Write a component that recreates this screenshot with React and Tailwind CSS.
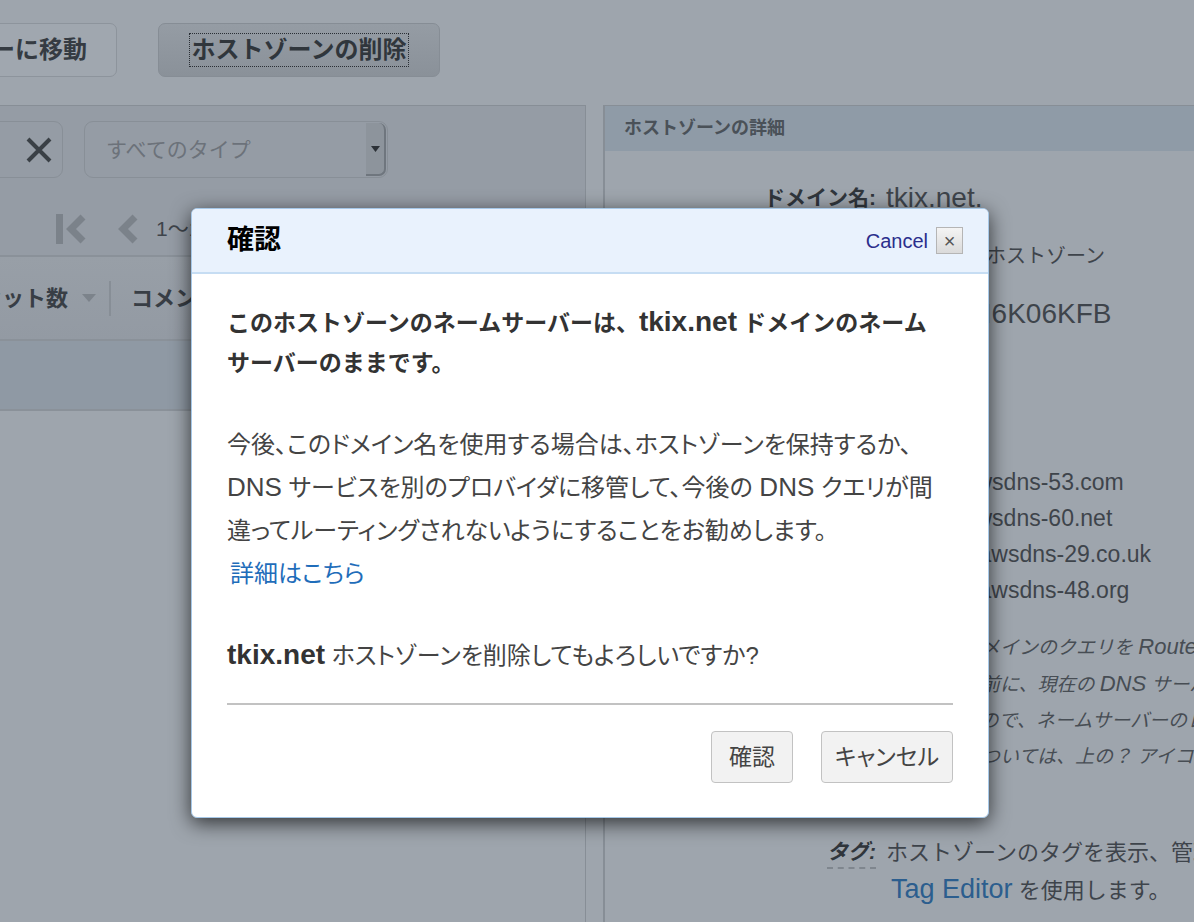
import React from "react";

const F = { fontFamily: '"Liberation Sans", "Noto Sans CJK JP", sans-serif' };

function FirstIcon() {
  return (
    <svg width="31" height="30" viewBox="0 0 31 30">
      <rect x="0" y="0" width="7" height="30" fill="#7b828a" />
      <polyline points="27,3 15,15 27,27" fill="none" stroke="#7b828a" strokeWidth="7" />
    </svg>
  );
}

function PrevIcon() {
  return (
    <svg width="20" height="30" viewBox="0 0 20 30">
      <polyline points="17,3 5,15 17,27" fill="none" stroke="#7b828a" strokeWidth="7" />
    </svg>
  );
}

function XIcon() {
  return (
    <svg width="26" height="26" viewBox="0 0 26 26">
      <path d="M2 2 L24 24 M24 2 L2 24" stroke="#3a4046" strokeWidth="4" />
    </svg>
  );
}

export default function App() {
  return (
    <div
      className="relative h-[922px] w-[1194px] overflow-hidden bg-[#9ea5ad] text-[#3b4148]"
      style={F}
    >
      {/* toolbar */}
      <div className="flex h-[105px] items-start gap-[41px] pt-[23px]">
        <div className="-ml-[159px] flex h-[54px] w-[276px] shrink-0 items-center justify-center rounded-[7px] border border-[#8d949c] bg-[#a0a7af] text-[24px] font-bold text-[#353b42]">
          リストビューに移動
        </div>
        <div className="flex h-[54px] w-[282px] shrink-0 items-center justify-center rounded-[7px] border border-[#868d95] bg-gradient-to-b from-[#959ca4] to-[#8a9199] text-[24px] font-bold text-[#30363c]">
          <span className="border border-dotted border-[#2a2f35] px-[2px] leading-[32px]">ホストゾーンの削除</span>
        </div>
      </div>

      {/* main */}
      <div className="flex h-[817px]">
        {/* left panel */}
        <div className="flex w-[586px] shrink-0 flex-col border-r border-t border-[#878e96]">
          <div className="flex h-[149px] flex-col bg-[#959ca5]">
            <div className="flex items-start gap-[21px] pt-[15px]">
              <div className="-ml-[20px] flex h-[57px] w-[83px] items-center justify-end rounded-[9px] border border-[#888f97] pr-[10px]">
                <XIcon />
              </div>
              <div className="flex h-[57px] w-[304px] items-stretch rounded-[9px] border border-[#888f97]">
                <div className="flex flex-1 items-center pl-[21px] text-[21px] text-[#6c727a]">すべてのタイプ</div>
                <div className="my-[1px] mr-[1px] flex w-[20px] items-center justify-center rounded-r-[7px] border-b-2 border-r-2 border-[#6f767e] bg-[#8d949c]">
                  <svg width="9" height="6" viewBox="0 0 9 6"><path d="M0 0 L9 0 L4.5 6 Z" fill="#2c3137" /></svg>
                </div>
              </div>
            </div>
            <div className="flex items-center pl-[56px] pt-[35px]">
              <FirstIcon />
              <div className="ml-[31px]"><PrevIcon /></div>
              <span className="ml-[18px] text-[21px] text-[#3e444b]">1～10</span>
            </div>
          </div>
          <div className="flex h-[84px] items-center border-t-2 border-[#8a9199] bg-gradient-to-b from-[#989fa7] to-[#939aa3]">
            <span className="-ml-[20px] text-[22px] font-bold text-[#383e45]">セット数</span>
            <svg className="ml-[14px]" width="14" height="8" viewBox="0 0 14 8"><path d="M0 0 L14 0 L7 8 Z" fill="#7c838b" /></svg>
            <div className="ml-[13px] h-[35px] w-[2px] bg-[#878e96]" />
            <span className="ml-[20px] text-[22px] font-bold text-[#383e45]">コメント</span>
          </div>
          <div className="h-[72px] border-t-2 border-b-2 border-[#8a9199] bg-[#8f99a4]" />
          <div className="flex-1" />
        </div>

        {/* right panel */}
        <div className="ml-[17px] flex min-w-0 flex-1 flex-col overflow-hidden border-l-2 border-t border-[#878e96]">
          <div className="flex h-[45px] shrink-0 items-center bg-[#8f9ba7] pl-[19px] text-[18px] font-bold text-[#4a5158]">
            ホストゾーンの詳細
          </div>
          <div className="grid grid-cols-[271px_1fr] gap-x-[10px] pt-[18px] text-[22px] text-[#3e444b]">
            <div className="flex h-[58px] items-center justify-end text-[21px] font-bold text-[#30363c]">ドメイン名:</div>
            <div className="flex h-[58px] items-center whitespace-nowrap text-[28px]">tkix.net.</div>
            <div className="flex h-[58px] items-center justify-end text-[21px] font-bold text-[#30363c]">タイプ:</div>
            <div className="flex h-[58px] items-center whitespace-nowrap text-[20px]">パブリックホストゾーン</div>
            <div className="flex h-[58px] items-center justify-end text-[21px] font-bold text-[#30363c]">ホストゾーン ID:</div>
            <div className="flex h-[58px] items-center whitespace-nowrap pl-[6px] text-[28px]">Z2M4UI6K06KFB</div>
            <div className="flex h-[58px] items-center justify-end text-[21px] font-bold text-[#30363c]">レコードセット数:</div>
            <div className="flex h-[58px] items-center whitespace-nowrap">2</div>
            <div className="flex h-[58px] items-center justify-end text-[21px] font-bold text-[#30363c]">コメント:</div>
            <div className="flex h-[58px] items-center whitespace-nowrap"></div>
            <div className="flex items-start justify-end pt-[5px] text-[21px] font-bold text-[#30363c]">ネームサーバー:</div>
            <div className="flex flex-col pt-[5px] text-[23px] leading-[36px] whitespace-nowrap">
              <span>ns-245.awsdns-53.com</span>
              <span>ns-508.awsdns-60.net</span>
              <span className="pl-[3px]">ns-1536.awsdns-29.co.uk</span>
              <span className="pl-[3px]">ns-1261.awsdns-48.org</span>
            </div>
            <div />
            <div className="mt-[21px] flex flex-col text-[19px] italic leading-[36px] whitespace-nowrap text-[#474d54]">
              <span>お使いのドメインのクエリを <span className="text-[22px]">Route 53</span> にルーティングするには</span>
              <span>を変更する前に、現在の <span className="text-[22px]">DNS</span> サーバーの設定を</span>
              <span>控えておくので、ネームサーバーのレコードを更新</span>
              <span>その方法については、上の？ アイコンをクリック</span>
            </div>
            <div className="mt-[60px] flex h-[36px] items-center justify-end">
              <span className="border-b-2 border-dashed border-[#7f868e] text-[21px] font-bold italic leading-[30px] text-[#30363c]">タグ:</span>
            </div>
            <div className="mt-[60px] flex flex-col leading-[36px] whitespace-nowrap">
              <span>ホストゾーンのタグを表示、管理するには</span>
              <span className="pl-[5px]">
                <span className="text-[27px] text-[#2c5e8e]">Tag Editor</span> を使用します。
              </span>
            </div>
          </div>
        </div>
      </div>

      {/* dialog */}
      <div className="absolute left-[191px] top-[208px] flex h-[610px] w-[798px] flex-col overflow-hidden rounded-[6px] border border-[#a6c8e8] bg-white shadow-[0_5px_20px_rgba(0,0,0,0.7)]">
        <div className="flex h-[65px] shrink-0 items-center justify-between border-b-2 border-[#c6ddf3] bg-[#e9f2fd] pl-[35px] pr-[25px]">
          <span className="text-[27px] font-bold text-black">確認</span>
          <div className="flex items-center gap-[8px]">
            <span className="text-[20px] text-[#2b2e8c]">Cancel</span>
            <div className="flex h-[27px] w-[27px] items-center justify-center border border-[#b5b5b5] bg-gradient-to-b from-[#f4f4f4] to-[#dadada] text-[20px] leading-none text-[#555]">
              ×
            </div>
          </div>
        </div>
        <div className="flex flex-col pl-[35px] pr-[35px] pt-[28px] text-[#444]">
          <div className="text-[23px] font-bold leading-[40px] text-[#333] whitespace-nowrap">
            <div>このホストゾーンのネームサーバーは、<span className="text-[28px]">tkix.net</span> ドメインのネーム</div>
            <div>サーバーのままです。</div>
          </div>
          <div className="mt-[40px] text-[24px] leading-[43px] whitespace-nowrap [font-feature-settings:'palt']">
            <div>今後、このドメイン名を使用する場合は、ホストゾーンを保持するか、</div>
            <div><span className="text-[26px]">DNS</span> サービスを別のプロバイダに移管して、今後の <span className="text-[26px]">DNS</span> クエリが間</div>
            <div>違ってルーティングされないようにすることをお勧めします。</div>
            <div className="pl-[3px] text-[#1f6dba]">詳細はこちら</div>
          </div>
          <div className="mt-[39px] text-[24px] leading-[42px] whitespace-nowrap [font-feature-settings:'palt']">
            <span className="text-[28px] font-bold text-[#333]">tkix.net</span> ホストゾーンを削除してもよろしいですか?
          </div>
          <div className="mt-[26px] h-[2px] bg-[#c2c2c2]" />
          <div className="mt-[26px] flex justify-end gap-[28px] text-[23px] [font-feature-settings:'palt']">
            <div className="flex h-[52px] w-[82px] items-center justify-center rounded-[4px] border border-[#c2c2c2] bg-[#f2f2f2] text-[#444]">確認</div>
            <div className="flex h-[52px] w-[132px] items-center justify-center rounded-[4px] border border-[#c2c2c2] bg-[#f2f2f2] text-[#444]">キャンセル</div>
          </div>
        </div>
      </div>
    </div>
  );
}
